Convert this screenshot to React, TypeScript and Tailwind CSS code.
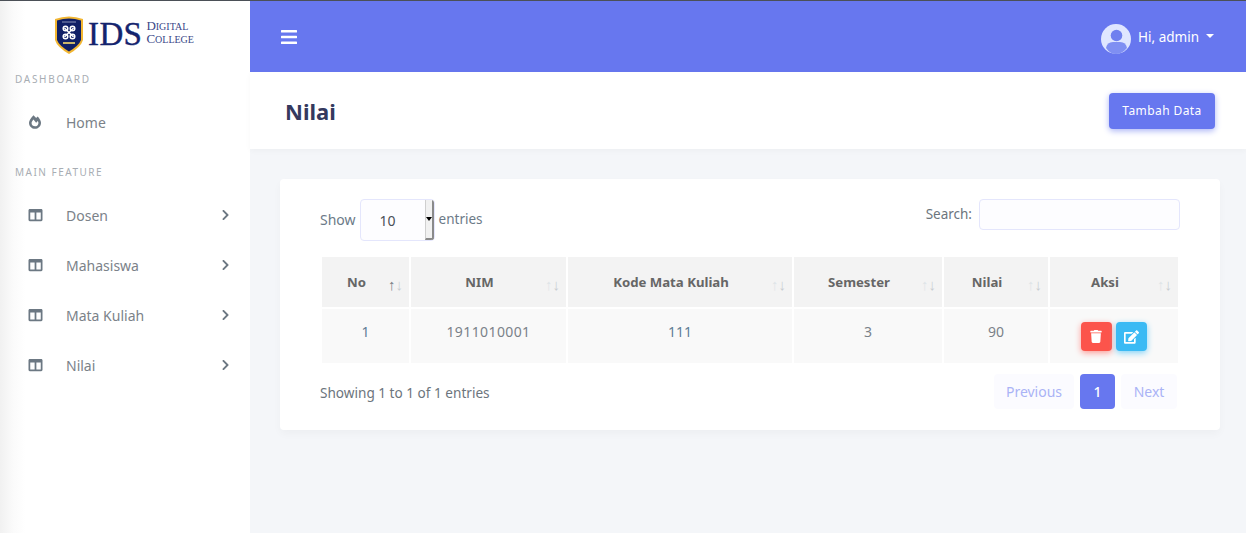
import { FaBars, FaChevronRight, FaColumns, FaEdit, FaFireAlt, FaTrash } from "react-icons/fa";

const menus = ["Dosen", "Mahasiswa", "Mata Kuliah", "Nilai"];

const heads = [
  { label: "No", w: "w-[87px]" },
  { label: "NIM", w: "w-[155px]" },
  { label: "Kode Mata Kuliah", w: "w-[224px]" },
  { label: "Semester", w: "w-[148px]" },
  { label: "Nilai", w: "w-[104px]" },
  { label: "Aksi", w: "w-[128px]" },
];

const Logo = () => {
  return (
    <div className="flex items-center h-[72px] pb-[5px] pl-[55px]">
      <svg width="28" height="39" viewBox="0 0 28 39">
        <path d="M0 4 Q14 -1 28 4 L28 25 Q26 32 14 39 Q2 32 0 25 Z" fill="#f2b632" />
        <path d="M2 5.500 Q14 1.500 26 5.500 L26 25 Q24 30.500 14 36.500 Q4 30.500 2 25 Z" fill="#101f66" />
        <g stroke="#ffffff" strokeWidth="1.500" fill="none">
          <path d="M9.500 13 L18.500 22 M18.500 13 L9.500 22" />
          <circle cx="10.500" cy="13.500" r="2.300" />
          <circle cx="17.500" cy="13.500" r="2.300" />
          <circle cx="10.500" cy="21.500" r="2.300" />
          <circle cx="17.500" cy="21.500" r="2.300" />
        </g>
        <path d="M7 7 L21 7" stroke="#8a93b8" strokeWidth="1" />
        <path d="M8 28 L20 28" stroke="#c9b46a" strokeWidth="2" />
      </svg>
      <span className="ml-[5px] font-['Liberation_Serif',serif] text-[33px] leading-none text-[#14246e] tracking-[0.4px] [-webkit-text-stroke:0.4px_#14246e]">IDS</span>
      <div className="ml-[4px] pb-[3px] font-['Liberation_Serif',serif] text-[#3a4788] text-[13px] leading-[12px]">
        <div>D<span className="text-[10px]">IGITAL</span></div>
        <div>C<span className="text-[10px]">OLLEGE</span></div>
      </div>
    </div>
  );
};

const Sidebar = () => {
  return (
    <aside className="w-[250px] shrink-0 bg-[linear-gradient(90deg,#f1f1f1,#fbfbfb_14px,#ffffff_26px)] min-h-[532px]">
      <Logo />
      <div className="pl-[15px] h-[13px] text-[10px] leading-[12px] tracking-[1.700px] text-[#a8adb3]">DASHBOARD</div>
      <div className="flex items-center h-[50px] mt-[11px] text-[14px] text-[#7b8289]">
        <FaFireAlt className="ml-[29px] w-[12px] h-[14px] text-[#6c7883]" />
        <span className="ml-[25px]">Home</span>
      </div>
      <div className="pl-[15px] h-[13px] mt-[19px] text-[10px] leading-[12px] tracking-[1.500px] text-[#a8adb3]">MAIN FEATURE</div>
      <div className="mt-[11px]">
        {menus.map((m) => (
          <div key={m} className="flex items-center h-[50px] text-[14px] text-[#7b8289]">
            <FaColumns className="ml-[28px] w-[15px] h-[14px] text-[#6c7883]" />
            <span className="ml-[23px]">{m}</span>
            <FaChevronRight className="ml-auto mr-[20px] w-[9px] h-[12px] text-[#6c7883]" />
          </div>
        ))}
      </div>
    </aside>
  );
};

const Navbar = () => {
  return (
    <header className="h-[71px] bg-[#6777ef] flex items-center">
      <FaBars className="ml-[31px] w-[16px] h-[20px] text-white" />
      <div className="ml-auto mr-[32px] flex items-center text-white text-[13.500px]">
        <svg width="30" height="30" viewBox="0 0 30 30" className="mt-[4px]">
          <circle cx="15" cy="15" r="15" fill="#dfe6ff" />
          <circle cx="15.500" cy="11.500" r="5.800" fill="#6f80ef" />
          <path d="M5 24 Q6 18 12 18 L19 18 Q25 18 26 24 Q21 30 15 30 Q9 30 5 24 Z" fill="#7f8ff2" />
        </svg>
        <span className="ml-[7px] mt-[1px]">Hi, admin</span>
        <span className="ml-[7px] w-0 h-0 border-x-[4px] border-x-transparent border-t-[4px] border-t-white mb-[2px]" />
      </div>
    </header>
  );
};

const DataTable = () => {
  return (
    <table className="ml-[40px] table-fixed border-separate border-spacing-[2px] w-[860px] text-[14px]">
      <thead>
        <tr>
          {heads.map((h) => (
            <th key={h.label} className={`${h.w} h-[50px] bg-[#f3f3f3] relative text-center font-bold text-[#666666]`}>
              <span className="pr-[18px] pt-[1px] block text-[13.200px]">{h.label}</span>
              <span className="absolute right-[6px] top-[20px] text-[15px] leading-[15px] font-normal text-[#c9cdd1] font-['Liberation_Sans',sans-serif]">
                <span className={h.label === "No" ? "text-[#7a7f85]" : "text-[#dfe5e8]"}>↑</span>↓
              </span>
            </th>
          ))}
        </tr>
      </thead>
      <tbody>
        <tr className="text-center text-[#7b8289]">
          <td className="h-[54px] bg-[#f9f9f9] text-[#5f7d95] pb-[10px]">1</td>
          <td className="h-[54px] bg-[#f9f9f9] pb-[10px] tracking-[0.4px]">1911010001</td>
          <td className="h-[54px] bg-[#f9f9f9] text-[#5f7d95] pb-[10px]">111</td>
          <td className="h-[54px] bg-[#f9f9f9] pb-[10px]">3</td>
          <td className="h-[54px] bg-[#f9f9f9] pb-[10px]">90</td>
          <td className="h-[54px] bg-[#f9f9f9]">
            <div className="flex justify-center gap-[4px] pr-[1px] pt-[1px]">
              <button className="w-[31px] h-[29px] rounded-[4px] bg-[#fc544b] shadow-[0_2px_6px_#fd9b96] flex items-center justify-center">
                <FaTrash className="w-[12px] h-[13px] text-white" />
              </button>
              <button className="w-[31px] h-[29px] rounded-[4px] bg-[#3abaf4] shadow-[0_2px_6px_#82d3f8] flex items-center justify-center">
                <FaEdit className="w-[15px] h-[14px] text-white" />
              </button>
            </div>
          </td>
        </tr>
      </tbody>
    </table>
  );
};

export default function App() {
  return (
    <div className="w-[1246px] h-[533px] overflow-hidden bg-[#f4f6f9] font-['Noto_Sans',sans-serif]">
      <div className="h-[1px] bg-[#4b5057]" />
      <div className="flex">
        <Sidebar />
        <main className="flex-1">
          <Navbar />
          <div className="h-[77px] bg-white flex items-center justify-between pl-[35px] pr-[31px] shadow-[0_2px_6px_rgba(0,0,0,0.03)]">
            <h1 className="mt-[2px] text-[22px] font-bold text-[#34395e]">Nilai</h1>
            <button className="w-[106px] h-[36px] mt-[1px] rounded-[4px] bg-[#6777ef] text-white text-[12px] tracking-[0.4px] shadow-[0_2px_6px_#acb5f6]">
              Tambah Data
            </button>
          </div>
          <section className="mt-[30px] ml-[30px] w-[940px] h-[251px] bg-white rounded-[4px] shadow-[0_4px_8px_rgba(0,0,0,0.03)] text-[#6c757d]">
            <div className="flex justify-between pt-[20px] pl-[40px] pr-[40px] h-[76px]">
              <div className="flex items-start text-[14px]">
                <span className="mt-[10px] text-[#6c7a88]">Show</span>
                <div className="ml-[4px] w-[75px] h-[42px] flex rounded-[4px] border border-[#e4e6fc] bg-[#fdfdff] overflow-hidden">
                  <span className="flex-1 pl-[19px] pt-[10px] text-[#495057]">10</span>
                  <span className="w-[9px] bg-[#f1f1f1] border-l border-l-[#cfcfcf] border-r-2 border-r-[#8a8a8a] border-b-2 border-b-[#8a8a8a] flex items-center justify-center">
                    <span className="w-0 h-0 border-x-[3px] border-x-transparent border-t-[4px] border-t-black" />
                  </span>
                </div>
                <span className="ml-[4px] mt-[10px] text-[13.500px] text-[#6c7a88]">entries</span>
              </div>
              <div className="flex items-start text-[14px]">
                <span className="mt-[5px] text-[13.500px]">Search:</span>
                <div className="ml-[7px] w-[201px] h-[31px] rounded-[4px] border border-[#e4e6fc] bg-[#fdfdff]" />
              </div>
            </div>
            <DataTable />
            <div className="flex justify-between items-start mt-[9px] pl-[40px] pr-[43px] text-[14px]">
              <span className="mt-[9px] text-[13.600px]">Showing 1 to 1 of 1 entries</span>
              <div className="flex items-center h-[35px]">
                <span className="w-[80px] h-[35px] rounded-[4px] bg-[#fbfbff] text-[#aab3f6] flex items-center justify-center">Previous</span>
                <span className="ml-[6px] w-[35px] h-[35px] rounded-[4px] bg-[#6777ef] text-white font-medium flex items-center justify-center">1</span>
                <span className="ml-[6px] w-[56px] h-[35px] rounded-[4px] bg-[#fbfbff] text-[#aab3f6] flex items-center justify-center">Next</span>
              </div>
            </div>
          </section>
        </main>
      </div>
    </div>
  );
}
